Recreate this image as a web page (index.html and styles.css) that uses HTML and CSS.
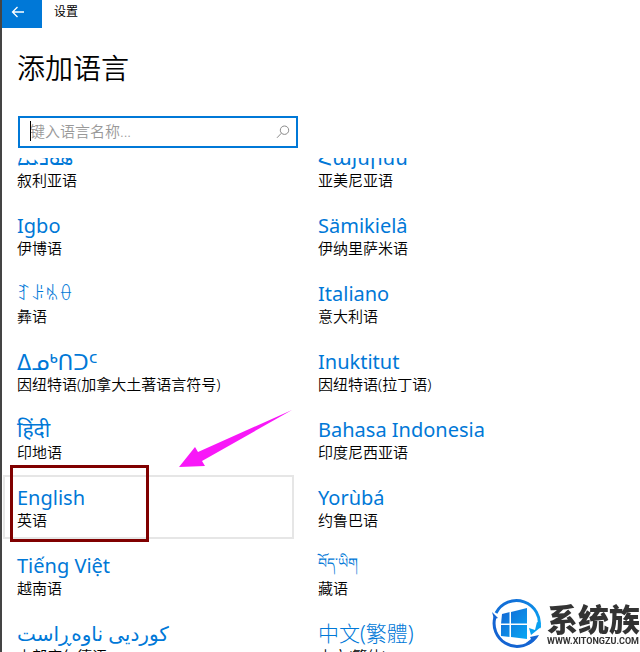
FILE: index.html
```html
<!DOCTYPE html>
<html lang="zh-CN">
<head>
    <meta charset="UTF-8">
    <meta name="viewport" content="width=device-width, initial-scale=1.0">
    <title>设置</title>
    <link rel="stylesheet" href="styles.css">
</head>
<body>
    <header class="titlebar">
        <button type="button" class="back" aria-label="返回">
            <svg width="14" height="12" viewBox="0 0 14 12"><path d="M13 6H1.5M6.5 1L1.5 6l5 5" fill="none" stroke="#fff" stroke-width="1.3"/></svg>
        </button>
        <span class="app-name">设置</span>
    </header>

    <main>
        <h1>添加语言</h1>
        <form class="search">
            <input type="text" id="languageName" aria-label="键入语言名称" placeholder="键入语言名称...">
            <span class="caret"></span>
            <button type="submit" class="search-button" aria-label="搜索">
                <svg width="14" height="14" viewBox="0 0 14 14"><circle cx="8.5" cy="5.2" r="4.2" fill="none" stroke="#8a8a8a"/><path d="M5.4 8.2L1 12.8" stroke="#8a8a8a"/></svg>
            </button>
        </form>

        <div class="scroller">
            <ul class="languages">
                <li><button type="button" class="language"><span class="name" lang="syr">ܣܘܪܝܝܐ</span><span class="local">叙利亚语</span></button></li>
                <li><button type="button" class="language"><span class="name" lang="hy">Հայերեն</span><span class="local">亚美尼亚语</span></button></li>
                <li><button type="button" class="language"><span class="name" lang="ig">Igbo</span><span class="local">伊博语</span></button></li>
                <li><button type="button" class="language"><span class="name" lang="smn">Sämikielâ</span><span class="local">伊纳里萨米语</span></button></li>
                <li><button type="button" class="language"><span class="name yi" lang="ii">ꆈꌠꁱꂷ</span><span class="local">彝语</span></button></li>
                <li><button type="button" class="language"><span class="name" lang="it">Italiano</span><span class="local">意大利语</span></button></li>
                <li><button type="button" class="language"><span class="name syllabics" lang="iu">ᐃᓄᒃᑎᑐᑦ</span><span class="local">因纽特语(加拿大土著语言符号)</span></button></li>
                <li><button type="button" class="language"><span class="name" lang="iu-Latn">Inuktitut</span><span class="local">因纽特语(拉丁语)</span></button></li>
                <li><button type="button" class="language"><span class="name devanagari" lang="hi">हिंदी</span><span class="local">印地语</span></button></li>
                <li><button type="button" class="language"><span class="name" lang="id">Bahasa Indonesia</span><span class="local">印度尼西亚语</span></button></li>
                <li class="marked">
                    <button type="button" class="language hovered"><span class="name" lang="en">English</span><span class="local">英语</span></button>
                    <span class="frame"></span>
                    <svg class="arrow" width="114" height="58" viewBox="0 0 114 58"><path d="M113 0L19 42L16 37L0 57L26 56L23 51Z" fill="#f818f8"/></svg>
                </li>
                <li><button type="button" class="language"><span class="name" lang="yo">Yorùbá</span><span class="local">约鲁巴语</span></button></li>
                <li><button type="button" class="language"><span class="name" lang="vi">Tiếng Việt</span><span class="local">越南语</span></button></li>
                <li><button type="button" class="language"><span class="name tibetan" lang="bo">བོད་ཡིག</span><span class="local">藏语</span></button></li>
                <li><button type="button" class="language"><span class="name" lang="ckb">کوردیی ناوەڕاست</span><span class="local">中部库尔德语</span></button></li>
                <li><button type="button" class="language"><span class="name hant" lang="zh-Hant">中文(繁體)</span><span class="local">中文(繁体)</span></button></li>
            </ul>
        </div>
    </main>

    <div class="watermark">
        <svg width="50" height="52" viewBox="0 0 50 52">
            <defs>
                <linearGradient id="blue" x1="0" y1="0" x2="1" y2="1">
                    <stop offset="0" stop-color="#1464d2"/>
                    <stop offset="1" stop-color="#08a8f4"/>
                </linearGradient>
            </defs>
            <path d="M4 16A23 23 0 0 1 47 31" fill="none" stroke="url(#blue)" stroke-width="3"/>
            <path d="M49 30L39 38l-2-7 6 2 2-8 3 1Z" fill="#08a0f0"/>
            <path d="M41 43A23 23 0 0 1 3 20" fill="none" stroke="#1464d2" stroke-width="3"/>
            <path d="M0 15l6 6-4 1Z" fill="#1464d2"/>
            <path d="M47 38l-9 2 1 2-5 4 2 2c5-2 9-6 11-10Z" fill="#1464d2"/>
            <path d="M10 17l8-2v12H9ZM19 15l16-4v16H19ZM9 28h9v12l-9-1ZM19 28h16v14l-16-2Z" fill="url(#blue)"/>
            <path d="M18 14v27M9 27h27" stroke="#fff"/>
        </svg>
        <div class="brand">
            <span class="brand-name">系统族</span>
            <span class="brand-url">WWW.XITONGZU.COM</span>
        </div>
    </div>
</body>
</html>
```
FILE: styles.css
```css
* {
    box-sizing: border-box;
}

body {
    margin: 0;
    height: 100vh;
    display: flex;
    flex-direction: column;
    overflow: hidden;
    background: #fff;
    border-left: 2px solid #444;
    color: #000;
    font-family: "Noto Sans", "Noto Sans CJK SC", "DejaVu Sans", sans-serif;
}

button {
    margin: 0;
    padding: 0;
    border: none;
    background: none;
    font: inherit;
    color: inherit;
    cursor: pointer;
}

/* Title bar */
.titlebar {
    display: flex;
    align-items: flex-start;
    gap: 12px;
}

.back {
    display: flex;
    justify-content: center;
    width: 40px;
    height: 28px;
    padding: 6px 8px 0 0;
    background: #0078d7;
}

.app-name {
    font-size: 12px;
    line-height: 24px;
}

main {
    flex: 1;
    min-height: 0;
    display: flex;
    flex-direction: column;
}

h1 {
    margin: 20px 0 28px 15px;
    font-size: 28px;
    font-weight: 350;
    line-height: 40px;
}

/* Search box */
.search {
    position: relative;
    display: flex;
    width: 280px;
    height: 32px;
    margin-left: 16px;
    border: 2px solid #0078d7;
}

.search input {
    flex: 1;
    min-width: 0;
    padding: 0 0 2px 10px;
    border: none;
    outline: none;
    background: none;
    font-family: inherit;
    font-size: 15px;
    font-weight: 350;
}

.search input::placeholder {
    color: #999;
}

.caret {
    position: absolute;
    left: 10px;
    top: 3px;
    width: 1px;
    height: 20px;
    background: #000;
}

.search-button {
    display: flex;
    align-items: center;
    padding: 0 6px;
}

/* Language list */
.scroller {
    flex: 1;
    min-height: 0;
    margin-top: 10px;
    overflow: hidden;
}

.languages {
    display: grid;
    grid-template-columns: repeat(auto-fill, 291px);
    gap: 4px 10px;
    margin: -23px 0 0 1px; /* scrolled part way through the first row */
    padding: 0;
    list-style: none;
}

.language {
    display: flex;
    flex-direction: column;
    width: 100%;
    height: 64px;
    padding: 7px 12px 0;
    border: 2px solid transparent;
    text-align: left;
    white-space: nowrap;
}

.language.hovered,
.language:hover {
    border-color: #e6e6e6;
}

.name {
    height: 26px;
    color: #0078d7;
    font-size: 20px;
    line-height: 28px;
}

.yi {
    font-size: 18px;
    line-height: 26px;
}

.syllabics {
    font-size: 21px;
}

.devanagari {
    font-size: 21px;
    line-height: 26px;
}

.tibetan {
    font-size: 14px;
    line-height: 22px;
}

.hant {
    font-size: 21px;
    font-weight: 300;
    line-height: 26px;
}

.local {
    height: 20px;
    font-size: 15px;
    font-weight: 350;
    line-height: 20px;
}

/* Marker on the English entry */
.marked {
    position: relative;
}

.frame {
    position: absolute;
    left: 7px;
    top: -10px;
    width: 139px;
    height: 77px;
    border: 3px solid #800000;
}

.arrow {
    position: absolute;
    left: 176px;
    top: -65px;
}

/* Site watermark */
.watermark {
    position: fixed;
    right: 0;
    bottom: 3px;
    display: flex;
    align-items: center;
    gap: 5px;
}

.brand {
    display: flex;
    flex-direction: column;
    color: #333;
}

.brand-name {
    font-family: "Noto Sans CJK SC", sans-serif;
    font-size: 31px;
    font-weight: 900;
    line-height: 36px;
}

.brand-url {
    font-family: Roboto, sans-serif;
    font-size: 9px;
    font-weight: 700;
    line-height: 10px;
}
```
